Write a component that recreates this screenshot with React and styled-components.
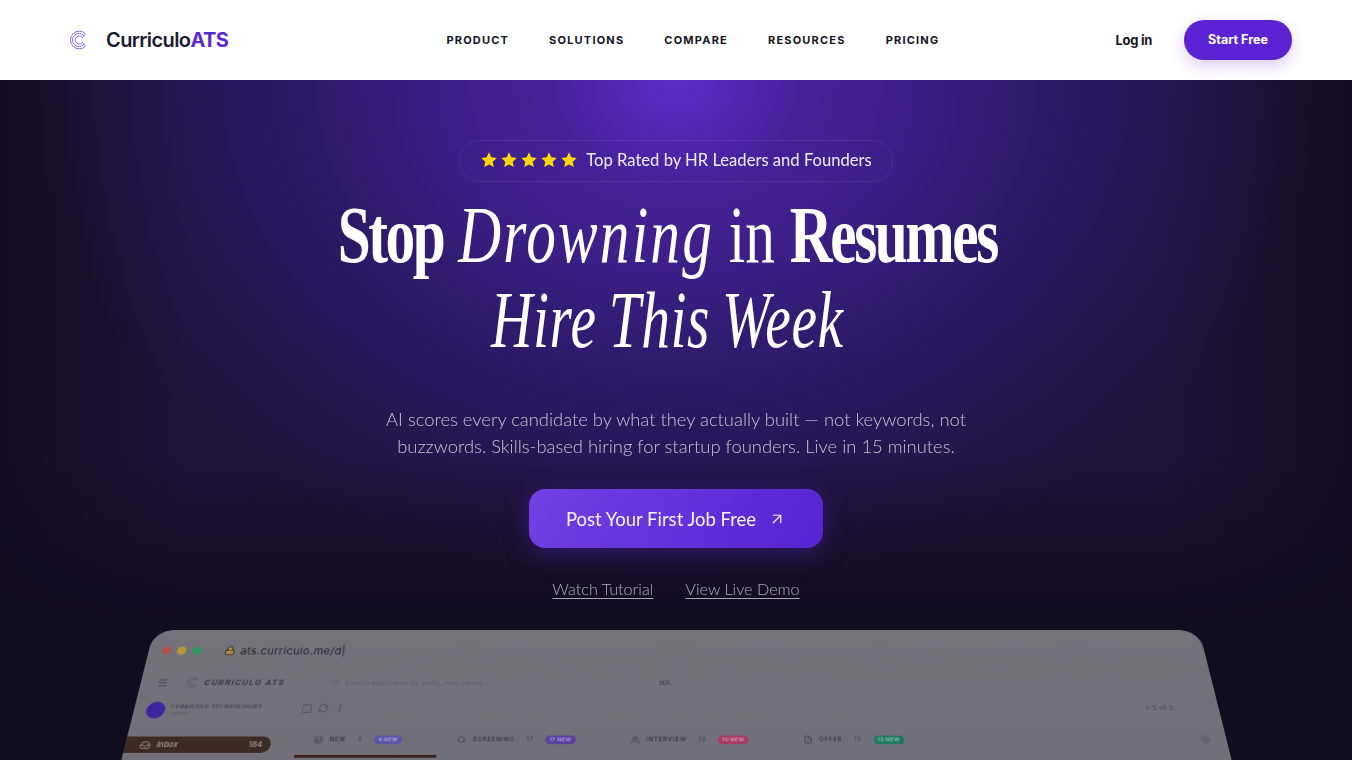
import React from 'react';
import styled, { createGlobalStyle, css } from 'styled-components';
import { ArrowUpRight, Menu, Search, RefreshCw, MoreVertical, Inbox, Star, Lock, Settings, Users, FileCheck, Layers } from 'lucide-react';

const GlobalStyle = createGlobalStyle`
  html, body {
    margin: 0;
    padding: 0;
    height: 760px;
    overflow: hidden;
    background: #100d1e;
  }
  * { box-sizing: border-box; }
`;

const bodyFont = `Lato, "Open Sans", sans-serif`;
const uiFont = `Inter, "Liberation Sans", sans-serif`;

// own layer, so the text gets plain grey antialiasing on the dark hero
const softText = css`
  transform: translateZ(0);
`;

const Page = styled.div`
  width: 1352px;
  height: 760px;
  overflow: hidden;
  font-family: ${bodyFont};
`;

const Nav = styled.header`
  height: 80px;
  padding: 0 60px 0 69px;
  background: #fff;
  display: flex;
  align-items: center;
  justify-content: space-between;
`;

const Brand = styled.div`
  display: flex;
  align-items: center;
  gap: 17px;
`;

const BrandName = styled.span`
  font-family: ${uiFont};
  font-size: 20px;
  font-weight: 600;
  letter-spacing: -0.6px;
  color: #1a1a2e;
  b { font-weight: 700; color: #5b2bd0; }
`;

const NavLinks = styled.nav`
  display: flex;
  gap: 40px;
  margin-left: 42px;
`;

const NavLink = styled.a`
  font-family: ${uiFont};
  font-size: 11px;
  font-weight: 700;
  letter-spacing: 1.2px;
  color: #15151f;
`;

const NavRight = styled.div`
  display: flex;
  align-items: center;
  gap: 32px;
`;

const Login = styled.a`
  font-family: ${uiFont};
  font-size: 13px;
  font-weight: 700;
  letter-spacing: -0.3px;
  color: #15151f;
`;

const StartButton = styled.button`
  width: 108px;
  height: 40px;
  padding: 0 0 2px;
  border: 0;
  border-radius: 20px;
  background: #5b22d3;
  color: #fff;
  font-family: ${uiFont};
  font-size: 12.5px;
  font-weight: 700;
  box-shadow: 0 6px 16px rgba(91, 34, 211, 0.22);
`;

const Hero = styled.main`
  height: 680px;
  padding-top: 60px;
  overflow: hidden;
  display: flex;
  flex-direction: column;
  align-items: center;
  background:
    linear-gradient(180deg, rgba(16, 13, 30, 0) 55%, #100d1e 80%),
    radial-gradient(ellipse 130px 110px at 50% 0, rgba(100, 50, 215, 0.55), rgba(100, 50, 215, 0) 100%),
    radial-gradient(ellipse 640px 520px at 50% 0, #4f25ae 0%, #3d1f88 35%, #2a1862 62%, rgba(30, 20, 60, 0) 100%),
    linear-gradient(90deg, #130e22 0%, #1f1338 14%, #1f1338 86%, #130e22 100%);
`;

const Badge = styled.div`
  ${softText}
  flex: none;
  width: 434px;
  height: 42px;
  padding-bottom: 2px;
  border-radius: 21px;
  border: 1px solid rgba(255, 255, 255, 0.07);
  display: flex;
  align-items: center;
  justify-content: center;
  gap: 8px;
  color: #f1ecfb;
  font-size: 16.6px;
`;

const Stars = styled.span`
  display: flex;
  gap: 2px;
`;

const Title = styled.h1`
  flex: none;
  margin: 11px 18px 0 0;
  font-family: "Liberation Serif", serif;
  font-size: 81px;
  line-height: 85px;
  font-weight: 400;
  color: #fff;
  text-align: center;
  white-space: nowrap;
`;

const TitleLine = styled.span`
  display: block;
  transform: scaleX(${(p) => p.$squeeze});
  b { font-weight: 700; letter-spacing: -3.3px; }
  i { font-style: italic; letter-spacing: 3px; }
`;

const WeekLine = styled(TitleLine)`
  word-spacing: -4px;
  i { letter-spacing: 0.8px; }
`;

const Lead = styled.p`
  ${softText}
  flex: none;
  margin: 43px 0 0;
  width: 640px;
  font-size: 18.4px;
  line-height: 27px;
  font-weight: 300;
  text-align: center;
  color: rgba(255, 255, 255, 0.72);
`;

const Cta = styled.button`
  ${softText}
  flex: none;
  margin-top: 29px;
  width: 294px;
  height: 59px;
  border: 0;
  border-radius: 16px;
  background: linear-gradient(120deg, #7141e4 0%, #5523d1 100%);
  box-shadow: 0 6px 26px rgba(95, 45, 215, 0.35);
  display: flex;
  align-items: center;
  justify-content: center;
  gap: 12px;
  color: #f6f2ff;
  font-family: ${bodyFont};
  font-size: 18.5px;
  font-weight: 400;
`;

const SubLinks = styled.div`
  ${softText}
  flex: none;
  margin-top: 31px;
  display: flex;
  gap: 32px;
`;

const SubLink = styled.a`
  font-size: 16.2px;
  font-weight: 300;
  color: rgba(255, 255, 255, 0.64);
  text-decoration: underline;
  text-underline-offset: 3px;
  text-decoration-thickness: 1px;
`;

const Preview = styled.section`
  flex: none;
  margin-top: 32px;
  width: 1045px;
  height: 300px;
  border-radius: 20px 20px 0 0;
  background: linear-gradient(180deg, #74737c 0%, #6d6c76 100%);
  transform-origin: center top;
  transform: perspective(1200px) rotateX(30deg);
  filter: blur(0.7px);
  color: #2c2b35;
  font-family: ${uiFont};
`;

const Chrome = styled.div`
  height: 44px;
  padding: 4px 0 0 13px;
  display: flex;
  align-items: center;
  gap: 6px;
  border-bottom: 1px solid rgba(0, 0, 0, 0.03);
`;

const Dot = styled.span`
  width: 9px;
  height: 9px;
  border-radius: 50%;
  background: ${(p) => p.$color};
`;

const Url = styled.span`
  margin-left: 17px;
  display: flex;
  align-items: center;
  gap: 5px;
  font-size: 11px;
  letter-spacing: 0.3px;
  color: #24232c;
`;

const Topbar = styled.div`
  height: 30px;
  padding: 0 0 0 16px;
  display: flex;
  align-items: center;
`;

const MenuGap = styled.span`
  width: 18px;
`;

const ProductName = styled.span`
  margin-left: 5px;
  width: 106px;
  font-size: 7.8px;
  font-weight: 700;
  font-style: italic;
  letter-spacing: 1.2px;
  color: #3a3943;
`;

const SearchHint = styled.span`
  margin-left: 18px;
  width: 319px;
  display: flex;
  align-items: center;
  gap: 5px;
  font-size: 7px;
  letter-spacing: 0.2px;
  color: #5c5b66;
`;

const Shortcut = styled.span`
  font-size: 7px;
  color: #45444e;
`;

const Body = styled.div`
  display: grid;
  grid-template-columns: 138px 1fr;
  column-gap: 24px;
`;

const Sidebar = styled.aside`
  padding-top: 6px;
`;

const Org = styled.div`
  display: flex;
  align-items: center;
  gap: 5px;
  margin: 0 0 19px 12px;
`;

const OrgLogo = styled.span`
  flex: none;
  width: 18px;
  height: 18px;
  border-radius: 50%;
  background: #3d24a0;
`;

const OrgText = styled.span`
  font-family: "Liberation Serif", serif;
  font-size: 5.8px;
  font-style: italic;
  letter-spacing: 0.5px;
  line-height: 8px;
  white-space: nowrap;
  color: #2f2e38;
  small { display: block; font-size: 5px; color: #55545e; }
`;

const SideItem = styled.div`
  width: 138px;
  height: 17px;
  padding: 0 8px 0 14px;
  margin-bottom: 3px;
  border-radius: 0 9px 9px 0;
  display: flex;
  align-items: center;
  gap: 6px;
  font-size: 7.5px;
  font-style: italic;
  font-weight: 600;
  background: ${(p) => (p.$active ? '#3c2a24' : 'transparent')};
  color: ${(p) => (p.$active ? '#9a948f' : '#3a3943')};
  em { margin-left: auto; font-style: normal; }
`;

const Main = styled.div`
  padding-top: 2px;
`;

const Tools = styled.div`
  height: 22px;
  display: flex;
  align-items: center;
  gap: 6px;
  padding-right: 43px;
  color: #4b4a54;
`;

const Check = styled.span`
  width: 9px;
  height: 9px;
  border: 1px solid #55545e;
  border-radius: 1px;
`;

const Paging = styled.span`
  margin-left: auto;
  font-size: 6.5px;
  letter-spacing: 0.5px;
  color: #44434d;
`;

const Tabs = styled.div`
  margin-top: 17px;
  padding-left: 16px;
  padding-right: 15px;
  display: flex;
  align-items: center;
  gap: 52px;
`;

const Tab = styled.div`
  display: flex;
  align-items: center;
  gap: 6px;
  font-size: 5.6px;
  font-weight: 700;
  letter-spacing: 0.8px;
  color: #3d3c46;
  svg { flex: none; }
`;

const Count = styled.span`
  font-weight: 500;
  margin: 0 5px;
  color: #45444e;
`;

const Pill = styled.span`
  padding: 1.5px 4px;
  border-radius: 7px;
  font-size: 5.2px;
  letter-spacing: 0.3px;
  color: rgba(255, 255, 255, 0.45);
  background: ${(p) => p.$color};
`;

const Gear = styled(Settings)`
  margin-left: auto;
  color: #55545e;
`;

const Underline = styled.div`
  margin-top: 11px;
  width: 134px;
  height: 3px;
  background: #3c2422;
`;

const tabs = [
  { name: 'NEW', count: '8', pill: '4 NEW', color: '#5b55a8', Icon: Layers },
  { name: 'SCREENING', count: '17', pill: '17 NEW', color: '#5a3f9e', Icon: Search },
  { name: 'INTERVIEW', count: '10', pill: '10 NEW', color: '#a83a66', Icon: Users },
  { name: 'OFFER', count: '10', pill: '12 NEW', color: '#1f7a5e', Icon: FileCheck },
];

const navItems = ['PRODUCT', 'SOLUTIONS', 'COMPARE', 'RESOURCES', 'PRICING'];

const LogoMark = ({ size = 20, color = '#8259dc' }) => (
  <svg width={size} height={size} viewBox="0 0 20 20" fill="none" stroke={color} strokeWidth="0.9">
    <path d="M16.5 3.8A8.8 8.8 0 1 0 16.5 16.2" />
    <path d="M15 5.8A6.5 6.5 0 1 0 15 14.2" />
    <path d="M13.6 7.6A4 4 0 1 0 13.6 12.4" />
    <path d="M16.5 3.8L13.6 7.6M16.5 16.2L13.6 12.4" />
  </svg>
);

const StarIcon = () => (
  <svg width="18" height="18" viewBox="0 0 24 24" fill="#ffd60a">
    <path d="M12 1.8l3.1 6.6 7.2.9-5.3 5 1.4 7.1L12 17.9l-6.4 3.5L7 14.3l-5.3-5 7.2-.9z" />
  </svg>
);

export default function App() {
  return (
    <Page>
      <GlobalStyle />
      <Nav>
        <Brand>
          <LogoMark />
          <BrandName>Curriculo<b>ATS</b></BrandName>
        </Brand>
        <NavLinks>
          {navItems.map((item) => <NavLink key={item}>{item}</NavLink>)}
        </NavLinks>
        <NavRight>
          <Login>Log in</Login>
          <StartButton>Start Free</StartButton>
        </NavRight>
      </Nav>
      <Hero>
        <Badge>
          <Stars>{[1, 2, 3, 4, 5].map((n) => <StarIcon key={n} />)}</Stars>
          Top Rated by HR Leaders and Founders
        </Badge>
        <Title>
          <TitleLine $squeeze={0.732}><b>Stop</b> <i>Drowning</i> in <b>Resumes</b></TitleLine>
          <WeekLine $squeeze={0.71}><i>Hire This Week</i></WeekLine>
        </Title>
        <Lead>
          AI scores every candidate by what they actually built — not keywords, not buzzwords. Skills-based hiring for startup founders. Live in 15 minutes.
        </Lead>
        <Cta>
          Post Your First Job Free
          <ArrowUpRight size={18} strokeWidth={1.6} />
        </Cta>
        <SubLinks>
          <SubLink>Watch Tutorial</SubLink>
          <SubLink>View Live Demo</SubLink>
        </SubLinks>
        <Preview>
          <Chrome>
            <Dot $color="#b5504e" />
            <Dot $color="#b59a2e" />
            <Dot $color="#2f9a58" />
            <Url><Lock size={11} color="#2a2620" fill="#b08a40" />ats.curriculo.me/d|</Url>
          </Chrome>
          <Topbar>
            <Menu size={11} color="#44434d" />
            <MenuGap />
            <LogoMark size={12} color="#55545e" />
            <ProductName>CURRICULO ATS</ProductName>
            <SearchHint><Search size={8} />Search applicants by skills, role, name ...</SearchHint>
            <Shortcut>⌘K</Shortcut>
          </Topbar>
          <Body>
            <Sidebar>
              <Org>
                <OrgLogo />
                <OrgText>CURRICULO TECHNOLOGIES<small>ADMIN</small></OrgText>
              </Org>
              <SideItem $active><Inbox size={10} />Inbox<em>184</em></SideItem>
              <SideItem><Star size={10} />Starred</SideItem>
            </Sidebar>
            <Main>
              <Tools>
                <Check />
                <RefreshCw size={10} />
                <MoreVertical size={10} />
                <Paging>1-5 of 5</Paging>
              </Tools>
              <Tabs>
                {tabs.map(({ name, count, pill, color, Icon }) => (
                  <Tab key={name}>
                    <Icon size={9} />
                    {name}
                    <Count>{count}</Count>
                    <Pill $color={color}>{pill}</Pill>
                  </Tab>
                ))}
                <Gear size={10} />
              </Tabs>
              <Underline />
            </Main>
          </Body>
        </Preview>
      </Hero>
    </Page>
  );
}
